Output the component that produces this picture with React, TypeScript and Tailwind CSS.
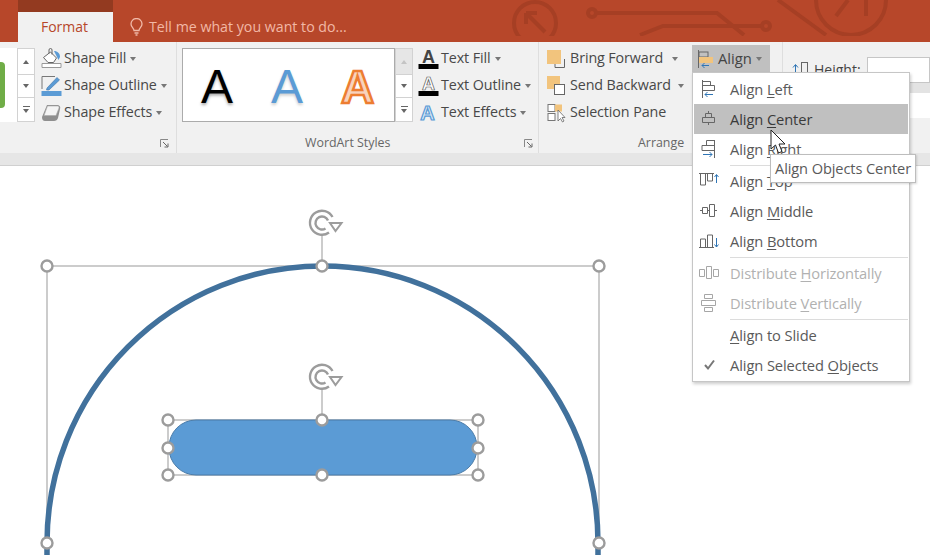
import React from "react";

const font = { fontFamily: '"Open Sans", "Noto Sans", sans-serif' };

function Caret({ className = "" }: { className?: string }) {
  return <span className={`inline-block w-0 h-0 border-l-[3.5px] border-r-[3.5px] border-t-[4px] border-l-transparent border-r-transparent border-t-[#777] ${className}`} />;
}

function Launcher({ className = "" }: { className?: string }) {
  return (
    <svg width="9" height="9" viewBox="0 0 9 9" className={className}>
      <path d="M0.5 8V0.5H8" fill="none" stroke="#888" />
      <path d="M3 3L7.5 7.5M8 4.5V8H4.5" fill="none" stroke="#666" />
    </svg>
  );
}

function Spin({ disabledTop = false }: { disabledTop?: boolean }) {
  return (
    <div className="flex flex-col w-[18px] h-[74px] border border-[#d2d2d2] bg-white">
      <div className={`h-[26px] flex items-center justify-center border-b border-[#d2d2d2] ${disabledTop ? "bg-[#e6e6e6]" : ""}`}>
        <span className={`w-0 h-0 border-l-[3px] border-r-[3px] border-b-[4px] border-l-transparent border-r-transparent ${disabledTop ? "border-b-[#c4c4c4]" : "border-b-[#666]"}`} />
      </div>
      <div className="h-[23px] flex items-center justify-center border-b border-[#d2d2d2]">
        <span className="w-0 h-0 border-l-[3px] border-r-[3px] border-t-[4px] border-l-transparent border-r-transparent border-t-[#666]" />
      </div>
      <div className="flex-1 flex flex-col items-center justify-center gap-[2px]">
        <span className="w-[7px] h-px bg-[#666]" />
        <span className="w-0 h-0 border-l-[3px] border-r-[3px] border-t-[4px] border-l-transparent border-r-transparent border-t-[#666]" />
      </div>
    </div>
  );
}

function Row({ icon, label, caretGap = "ml-[4px]", w }: { icon: React.ReactNode; label: string; caretGap?: string; w: string }) {
  return (
    <div className={`h-[27px] flex items-center ${w}`}>
      <span className="w-[23px] h-[22px] shrink-0 flex items-center">{icon}</span>
      <span className="text-[14.3px] leading-none text-[#484848] whitespace-nowrap tracking-[-0.1px]">{label}</span>
      {caretGap !== "none" && <Caret className={caretGap} />}
    </div>
  );
}

const ShapeFill = (
  <svg width="21" height="21" viewBox="0 0 21 21">
    <path d="M1 15.500h19v4H1z" fill="#fff" stroke="#999" />
    <path d="M2.500 9.500L9.500 4l6 6-3 4.500H7z" fill="#fff" stroke="#666" />
    <path d="M8 5.500V2a1.500 1.500 0 013 0V6.500" fill="none" stroke="#666" />
    <path d="M13 3c3.500 0 6 2.500 6 6l-1.500 3-2.500-5z" fill="#5b9bd5" />
  </svg>
);
const ShapeOutline = (
  <svg width="21" height="21" viewBox="0 0 21 21">
    <path d="M1 14V1.500h13" fill="none" stroke="#777" />
    <path d="M6 13L16 2.500l2.500 2.500L8 15H5.500z" fill="#5b9bd5" stroke="#3f73a6" strokeWidth="0.6" />
    <rect x="0.5" y="16" width="20" height="5" fill="#5b9bd5" />
  </svg>
);
const ShapeEffects = (
  <svg width="20" height="18" viewBox="0 0 20 18">
    <path d="M6 1h11q3 1 2 4l-2 9q-1 3-4 3H4Q1 17 1 13z" fill="#8f8f8f" />
    <path d="M6.500 2H17q1.500.5 1 2l-3 7.500H3z" fill="#f4f4f4" stroke="#aaa" strokeWidth="0.6" />
  </svg>
);
const TextFillIcon = (
  <svg width="21" height="21" viewBox="0 0 21 21">
    <text x="10.500" y="15" textAnchor="middle" fontSize="18" fontWeight="700" fill="#444" style={{ fontFamily: '"Liberation Sans", sans-serif' }}>A</text>
    <rect x="0.5" y="16" width="20" height="5" fill="#000" />
  </svg>
);
const TextOutlineIcon = (
  <svg width="21" height="21" viewBox="0 0 21 21">
    <text x="10.500" y="15" textAnchor="middle" fontSize="18" fontWeight="700" fill="#fff" stroke="#555" strokeWidth="0.7" style={{ fontFamily: '"Liberation Sans", sans-serif' }}>A</text>
    <rect x="0.5" y="16" width="20" height="5" fill="#000" />
  </svg>
);
const TextEffectsIcon = (
  <svg width="20" height="20" viewBox="0 0 20 20">
    <text x="9.500" y="17" textAnchor="middle" fontSize="20" fontWeight="700" fill="#dbe9f6" stroke="#5b9bd5" strokeWidth="1.200" style={{ fontFamily: '"Liberation Sans", sans-serif' }}>A</text>
  </svg>
);
const BringForward = (
  <svg width="20" height="20" viewBox="0 0 20 20">
    <rect x="0" y="1" width="14" height="14" fill="#f2c47d" />
    <path d="M17.500 10v8.500H8V15" fill="none" stroke="#666" />
  </svg>
);
const SendBackward = (
  <svg width="20" height="20" viewBox="0 0 20 20">
    <rect x="0" y="0" width="13" height="13" fill="#f2c47d" />
    <rect x="7.500" y="8.500" width="10" height="10" fill="#fff" stroke="#666" />
  </svg>
);
const SelectionPane = (
  <svg width="20" height="20" viewBox="0 0 20 20">
    <rect x="1" y="1.500" width="7" height="7" fill="#fff" stroke="#777" />
    <rect x="8" y="1.500" width="7" height="7" fill="#f2c47d" />
    <rect x="1" y="10.500" width="7" height="7" fill="#fff" stroke="#777" />
    <path d="M11 7v11l2.500-2.500 2 3.500 1.500-1-2-3.500h3z" fill="#fff" stroke="#666" strokeWidth="0.8" />
  </svg>
);

function AlignIco({ d, arrow }: { d: string; arrow?: string }) {
  return (
    <svg width="20" height="20" viewBox="0 0 20 20">
      <path d={d} fill="none" stroke="#666" />
      {arrow && <path d={arrow} fill="none" stroke="#2f75b5" />}
    </svg>
  );
}

const icoLeft = <AlignIco d="M3.500 1v18M3.500 2.500h8v4h-8M3.500 6.500h12v5h-12" arrow="M14 15.500H6M8.500 13L6 15.500 8.500 18" />;
const icoCenter = <AlignIco d="M9.500 2v2M9.500 14v2M6.500 4.500h6v4h-6zM3.500 8.500h12v5h-12z" />;
const icoRight = <AlignIco d="M15.500 1v18M15.500 1.500h-8v5h8M15.500 6.500H3v5h12.500" arrow="M4 15.500h9M10.500 13l2.500 2.500-2.500 2.500" />;
const icoTop = <AlignIco d="M0 2.500h15M1.500 3v11h5V3M8.500 3v7h5V3" arrow="M17.500 12V4M15.500 6L17.500 3.500l2 2.500" />;
const icoMiddle = <AlignIco d="M1 9.500h2M9 9.500h2M16 9.500h2M3.500 6.500h5v6h-5zM10.500 3.500h5v12h-5z" />;
const icoBottom = <AlignIco d="M0 16.500h15M1.500 16V8h5v8M8.500 16V4h5v12" arrow="M17.500 7v9M15.500 13.500l2 2.500 2-2.500" />;
const icoDistH = (
  <svg width="20" height="20" viewBox="0 0 20 20">
    <path d="M0.500 6.500h5v7h-5zM7.500 3.500h5v12h-5zM14.500 6.500h5v7h-5z" fill="none" stroke="#a6a6a6" />
  </svg>
);
const icoDistV = (
  <svg width="20" height="20" viewBox="0 0 20 20">
    <path d="M5.500 1.500h8v4h-8zM2.500 7.500h14v5h-14zM5.500 14.500h8v4h-8z" fill="none" stroke="#a6a6a6" />
  </svg>
);

function MenuItem({ icon, pre, u, post, active, disabled }: { icon?: React.ReactNode; pre: string; u: string; post: string; active?: boolean; disabled?: boolean }) {
  return (
    <div className={`h-[30px] flex items-center ${active ? "bg-[#c0c0c0]" : ""}`}>
      <span className="w-[36px] pl-[5px] shrink-0 flex items-center justify-start">{icon}</span>
      <span className={`pt-px text-[14.7px] leading-none whitespace-nowrap tracking-[-0.1px] ${disabled ? "text-[#b1b1b1]" : active ? "text-[#3a3a3a]" : "text-[#5a5a5a]"}`}>
        {pre}
        <span className="underline underline-offset-2">{u}</span>
        {post}
      </span>
    </div>
  );
}

function Sep() {
  return <div className="h-[2px] ml-[36px] flex items-center"><div className="h-px w-full bg-[#dcdcdc]" /></div>;
}

function Handle({ x, y }: { x: number; y: number }) {
  return <circle cx={x} cy={y} r="5.500" fill="#fff" stroke="#9c9c9c" strokeWidth="2.400" />;
}

function Rotate({ x, y }: { x: number; y: number }) {
  return (
    <g transform={`translate(${x} ${y})`} fill="none" stroke="#9c9c9c" strokeWidth="2.400">
      <path d="M7 9.500A12 12 0 1 1 10.500 -6" />
      <path d="M3.500 5.500A6.500 6.500 0 1 1 6 -2.500" />
      <path d="M8 0H19.500L13.500 8z" fill="#fff" strokeWidth="2" />
    </g>
  );
}

export default function App() {
  return (
    <div className="relative w-[930px] h-[555px] overflow-hidden bg-white" style={font}>
      {/* title band */}
      <div className="relative h-[42px] bg-[#b7472a] overflow-hidden">
        <svg width="930" height="42" viewBox="0 0 930 42" className="absolute left-0 top-0">
          <g fill="none" stroke="#a63f24" strokeWidth="4">
            <circle cx="535" cy="23" r="21" />
            <path d="M526 13V24M526 13H537M527 14L545 32" />
            <circle cx="592" cy="13" r="4" />
            <path d="M596 13H717L744 35" />
            <path d="M640 35L663 26H762" />
            <circle cx="766" cy="26" r="4" />
            <path d="M778 0L826 35" />
            <circle cx="851" cy="0" r="35" />
            <path d="M836 16L848 0M866 0V16" />
          </g>
          <rect x="0" y="36" width="930" height="6" fill="#b7472a" />
        </svg>
        <div className="relative flex h-full pl-[18px]">
          <div className="w-[95px] flex flex-col">
            <div className="h-[12px] bg-[#933a20]" />
            <div className="flex-1 bg-[#f1f1f1] flex items-center justify-center pb-[2px] pr-[2px] text-[14px] text-[#b7472a]">Format</div>
          </div>
          <div className="flex items-center pl-[17px] pt-[12px] gap-[6px]">
            <svg width="13" height="18" viewBox="0 0 13 18" fill="none" stroke="#f0b9a8" strokeWidth="1.300">
              <path d="M4 12.500C4 10 1 9 1 6a5.500 5.500 0 0111 0c0 3-3 4-3 6.500z" />
              <path d="M4.500 15h4M5.500 17h2" />
            </svg>
            <span className="text-[14.2px] leading-none text-[#f2b8a6] whitespace-nowrap">Tell me what you want to do...</span>
          </div>
        </div>
      </div>

      {/* ribbon */}
      <div className="flex h-[111px] bg-[#f1f1f1]">
        {/* shape styles */}
        <div className="relative w-[177px] shrink-0 border-r border-[#dedede] flex pt-[6px]">
          <div className="w-[17px] h-[74px] bg-white flex items-center">
            <div className="w-[5px] h-[46px] bg-[#70ad47] rounded-r-[4px]" />
          </div>
          <Spin />
          <div className="flex flex-col pl-[6px] -mt-[3px]">
            <Row icon={ShapeFill} label="Shape Fill" w="w-[130px]" />
            <Row icon={ShapeOutline} label="Shape Outline" w="w-[130px]" />
            <Row icon={ShapeEffects} label="Shape Effects" w="w-[130px]" />
          </div>
          <Launcher className="absolute right-[7px] bottom-[5px]" />
        </div>
        {/* wordart */}
        <div className="relative w-[362px] shrink-0 border-r border-[#dedede] flex pt-[6px] pl-[5px]">
          <div className="w-[213px] h-[74px] bg-white border border-[#ababab] flex items-center pl-[18px] gap-[38px] overflow-hidden">
            <span className="pt-[4px] text-[48px] leading-none text-black [text-shadow:0_2px_3px_rgba(0,0,0,0.35)] [font-family:'Liberation_Sans',sans-serif]">A</span>
            <span className="pt-[4px] text-[48px] leading-none text-[#5b9bd5] [text-shadow:0_2px_3px_rgba(0,0,0,0.2)] [font-family:'Liberation_Sans',sans-serif]">A</span>
            <span className="pt-[4px] text-[46px] font-bold leading-none text-[#f8d3bc] [-webkit-text-stroke:2.500px_#ed7d31] [font-family:'Liberation_Sans',sans-serif]">A</span>
          </div>
          <Spin disabledTop />
          <div className="flex flex-col pl-[5px] -mt-[3px]">
            <Row icon={TextFillIcon} label="Text Fill" w="w-[118px]" />
            <Row icon={TextOutlineIcon} label="Text Outline" w="w-[118px]" />
            <Row icon={TextEffectsIcon} label="Text Effects" w="w-[118px]" />
          </div>
          <span className="absolute left-[128px] bottom-[2px] text-[12.4px] leading-[16px] text-[#666]">WordArt Styles</span>
          <Launcher className="absolute right-[5px] bottom-[5px]" />
        </div>
        {/* arrange */}
        <div className="relative w-[244px] shrink-0 border-r border-[#dedede] flex pt-[3px] pl-[8px]">
          <div className="flex flex-col">
            <Row icon={BringForward} label="Bring Forward" caretGap="ml-[9px]" w="w-[145px]" />
            <Row icon={SendBackward} label="Send Backward" caretGap="ml-[7px]" w="w-[145px]" />
            <Row icon={SelectionPane} label="Selection Pane" caretGap="none" w="w-[145px]" />
          </div>
          <div className="h-[27px] w-[78px] bg-[#c0c0c0] flex items-center pl-[5px]">
            <span className="w-[20px]">
              <svg width="18" height="21" viewBox="0 0 18 21">
                <rect x="2" y="4" width="9" height="5" fill="none" stroke="#666" />
                <rect x="2" y="9" width="14" height="6" fill="#f2c47d" />
                <path d="M1.500 2v18" stroke="#666" />
                <path d="M12 17.500H5M7.500 15L5 17.500 7.500 20" fill="none" stroke="#2f75b5" />
              </svg>
            </span>
            <span className="text-[14.8px] leading-none text-[#444] ml-[1px]">Align</span>
            <Caret className="ml-[4px]" />
          </div>
          <span className="absolute left-[99px] bottom-[2px] text-[12.4px] leading-[16px] text-[#666]">Arrange</span>
        </div>
        {/* size */}
        <div className="flex-1 pl-[9px] pt-[15px] flex flex-col">
          <div className="h-[26px] flex items-center">
            <svg width="18" height="18" viewBox="0 0 18 18" fill="none" stroke="#666">
              <path d="M3.500 16V4M1 6.500l2.500-3 2.500 3" stroke="#2f75b5" />
              <rect x="9.500" y="1.500" width="6" height="15" />
            </svg>
            <span className="ml-[4px] w-[53px] text-[14px] leading-none text-[#444]">Height:</span>
            <div className="flex-1 h-[26px] bg-white border border-[#c6c6c6]" />
          </div>
          <div className="h-[10px] bg-[#e3e3e3]" />
          <div className="h-[25px] ml-[75px] bg-white" />
        </div>
      </div>
      <div className="h-[13px] bg-[#e6e6e6] border-b border-[#d0d0d0]" />

      {/* slide canvas */}
      <div className="relative h-[389px] bg-white">
        <svg width="930" height="389" viewBox="0 166 930 389" className="absolute left-0 top-0">
          <path d="M47 555V266H599V555" fill="none" stroke="#999" />
          <path d="M47 555V543A275.500 277 0 0 1 598 543V555" fill="none" stroke="#41719c" strokeWidth="5.500" />
          <path d="M322 234V266M322 389V420" stroke="#999" />
          <Rotate x={322} y={223} />
          <Rotate x={322} y={377} />
          <Handle x={47} y={266} />
          <Handle x={322} y={266} />
          <Handle x={599} y={266} />
          <Handle x={47} y={543} />
          <Handle x={599} y={543} />
          <rect x="168" y="420" width="310" height="55" fill="none" stroke="#999" />
          <rect x="169" y="420" width="308" height="55" rx="27" fill="#5b9bd5" stroke="#4a7ba8" />
          <Handle x={168} y={420} />
          <Handle x={322} y={420} />
          <Handle x={478} y={420} />
          <Handle x={168} y={448} />
          <Handle x={478} y={448} />
          <Handle x={168} y={475} />
          <Handle x={322} y={475} />
          <Handle x={478} y={475} />
        </svg>
      </div>

      {/* align dropdown */}
      <div className="absolute left-[692px] top-[72px] w-[218px] h-[310px] bg-white border border-[#c6c6c6] shadow-[1px_2px_3px_rgba(0,0,0,0.2)] p-px">
        <MenuItem icon={icoLeft} pre="Align " u="L" post="eft" />
        <MenuItem icon={icoCenter} pre="Align " u="C" post="enter" active />
        <MenuItem icon={icoRight} pre="Align " u="R" post="ight" />
        <Sep />
        <MenuItem icon={icoTop} pre="Align " u="T" post="op" />
        <MenuItem icon={icoMiddle} pre="Align " u="M" post="iddle" />
        <MenuItem icon={icoBottom} pre="Align " u="B" post="ottom" />
        <Sep />
        <MenuItem icon={icoDistH} pre="Distribute " u="H" post="orizontally" disabled />
        <MenuItem icon={icoDistV} pre="Distribute " u="V" post="ertically" disabled />
        <Sep />
        <MenuItem pre="" u="A" post="lign to Slide" />
        <MenuItem
          icon={
            <svg width="20" height="20" viewBox="0 0 20 20">
              <path d="M6 10l3 3.500L15 5.500" fill="none" stroke="#777" strokeWidth="2" />
            </svg>
          }
          pre="Align Selected "
          u="O"
          post="bjects"
        />
      </div>

      {/* cursor */}
      <svg width="18" height="26" viewBox="0 0 18 26" className="absolute left-[770px] top-[129px]">
        <path d="M1 1V20L5.500 16 8.500 24 12 22.500 9 15H15z" fill="#fff" stroke="#222" />
      </svg>

      {/* tooltip */}
      <div className="absolute left-[770px] top-[154px] w-[146px] h-[29px] bg-white border border-[#bdbdbd] shadow-[1px_1px_2px_rgba(0,0,0,0.15)] flex items-center pl-[4px] text-[14.6px] leading-none text-[#5a5a5a] whitespace-nowrap tracking-[-0.1px]">
        Align Objects Center
      </div>
    </div>
  );
}
